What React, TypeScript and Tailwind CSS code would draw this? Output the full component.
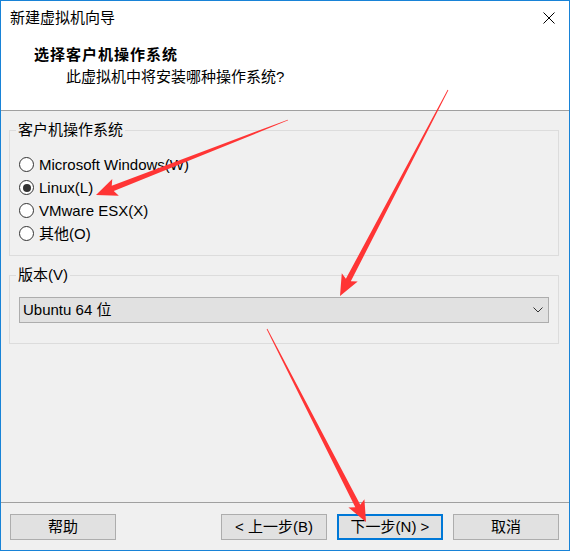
import React from 'react';

type Pt = [number, number];

// red annotation arrow, tapered shaft + head
function arrowPoints(tail: Pt, tip: Pt): string {
  const dx = tip[0] - tail[0];
  const dy = tip[1] - tail[1];
  const len = Math.hypot(dx, dy);
  const ux = dx / len;
  const uy = dy / len;
  const nx = -uy;
  const ny = ux;
  const headLen = 18;
  const base: Pt = [tip[0] - ux * headLen, tip[1] - uy * headLen];
  const back: Pt = [tip[0] - ux * (headLen + 3), tip[1] - uy * (headLen + 3)];
  const p = (pt: Pt, k: number): string => `${pt[0] + nx * k},${pt[1] + ny * k}`;
  return [
    p(tail, 0.4),
    p(base, 2.8),
    p(back, 9),
    `${tip[0]},${tip[1]}`,
    p(back, -9),
    p(base, -2.8),
    p(tail, -0.4),
  ].join(' ');
}

const arrows: [Pt, Pt][] = [
  [[288, 120], [96, 195]],
  [[448, 90], [340, 296]],
  [[267, 329], [366, 522]],
];

function Radio({ label, checked }: { label: string; checked?: boolean }) {
  return (
    <div className="flex h-[23px] items-center">
      <span className="flex h-[15px] w-[15px] shrink-0 items-center justify-center rounded-full border border-[#333333] bg-white">
        {checked && <span className="h-[8px] w-[8px] rounded-full bg-[#333333]" />}
      </span>
      <span className="ml-[5px] text-[15px] leading-[20px] text-black">{label}</span>
    </div>
  );
}

function Button({ label, focused }: { label: string; focused?: boolean }) {
  return (
    <div
      className={
        focused
          ? 'flex h-[26px] w-[106px] items-center justify-center border-2 border-[#0078d7] bg-[#e1e1e1] text-[15px] text-black'
          : 'flex h-[26px] w-[106px] items-center justify-center border border-[#adadad] bg-[#e1e1e1] text-[15px] text-black'
      }
    >
      {label}
    </div>
  );
}

export default function App() {
  return (
    <div className="relative flex h-[551px] w-[570px] flex-col border border-[#1883d7] bg-[#f0f0f0] font-['Liberation_Sans','Noto_Sans_CJK_SC',sans-serif] text-black">
      <div className="flex h-[110px] flex-col border-b border-[#a0a0a0] bg-white">
        <div className="flex h-[34px] items-center justify-between pl-[9px] pr-[14px]">
          <span className="text-[15px] leading-[20px]">新建虚拟机向导</span>
          <svg width="12" height="12" viewBox="0 0 12 12">
            <path d="M0.5 0.5 L11.5 11.5 M11.5 0.5 L0.5 11.5" stroke="#000" strokeWidth="1" fill="none" />
          </svg>
        </div>
        <div className="mt-[10px] pl-[33px] text-[15px] font-bold leading-[20px] tracking-[1px]">选择客户机操作系统</div>
        <div className="mt-[2px] pl-[65px] text-[15px] leading-[20px]">此虚拟机中将安装哪种操作系统?</div>
      </div>

      <fieldset className="mt-[9px] ml-[8px] mr-[10px] border border-[#dcdcdc] px-[9px] pb-[10px]">
        <legend className="-ml-[3px] px-[2px] text-[15px] leading-[20px]">客户机操作系统</legend>
        <div className="flex flex-col pt-[13px]">
          <Radio label="Microsoft Windows(W)" />
          <Radio label="Linux(L)" checked />
          <Radio label="VMware ESX(X)" />
          <Radio label="其他(O)" />
        </div>
      </fieldset>

      <fieldset className="mt-[9px] ml-[8px] mr-[10px] border border-[#dcdcdc] px-[9px] pb-[20px]">
        <legend className="-ml-[3px] px-[2px] text-[15px] leading-[20px]">版本(V)</legend>
        <div className="mt-[12px] flex h-[26px] items-center justify-between border border-[#adadad] bg-[#e1e1e1] pl-[3px] pr-[5px]">
          <span className="text-[15px] leading-[20px]">Ubuntu 64 位</span>
          <svg width="10" height="6" viewBox="0 0 10 6">
            <path d="M0.5 0.5 L5 5 L9.5 0.5" stroke="#333" strokeWidth="1" fill="none" />
          </svg>
        </div>
      </fieldset>

      <div className="flex-1" />

      <div className="flex items-center border-t border-[#a0a0a0] pt-[11px] pb-[10px] pl-[9px] pr-[10px]">
        <Button label="帮助" />
        <div className="flex-1" />
        <div className="flex gap-[10px]">
          <Button label="< 上一步(B)" />
          <Button label="下一步(N) >" focused />
          <Button label="取消" />
        </div>
      </div>

      <svg className="pointer-events-none absolute -left-px -top-px" width="570" height="551" viewBox="0 0 570 551">
        {arrows.map(([tail, tip], i) => (
          <polygon key={i} points={arrowPoints(tail, tip)} fill="#ff3535" />
        ))}
      </svg>
    </div>
  );
}
